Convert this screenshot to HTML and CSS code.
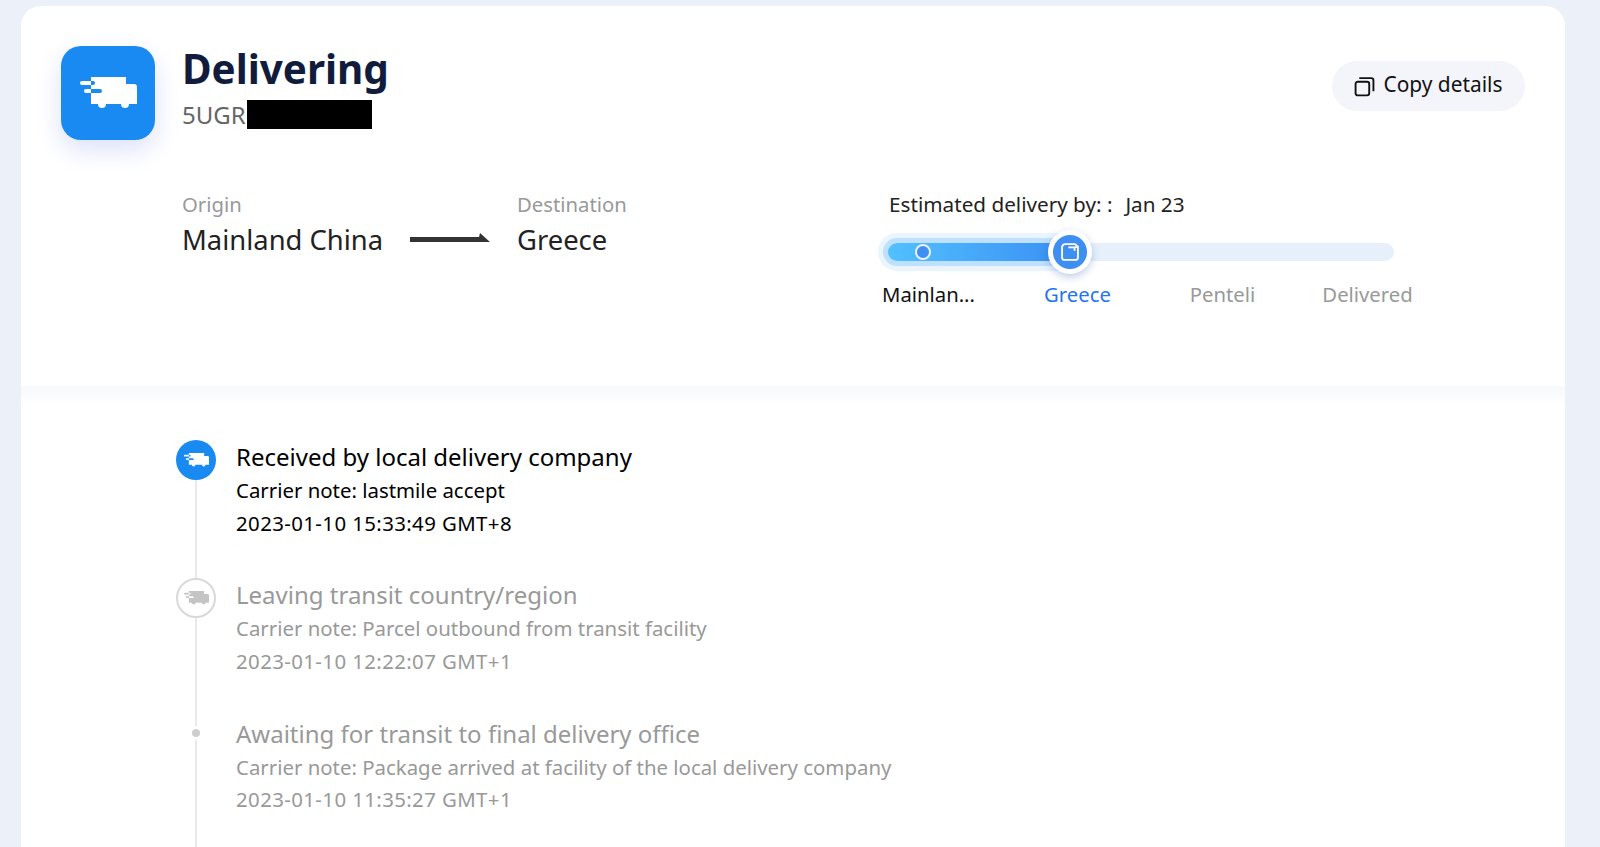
FILE: index.html
```html
<!DOCTYPE html>
<html lang="en">
<head>
<meta charset="utf-8">
<title>Delivering</title>
<link rel="stylesheet" href="styles.css">
</head>
<body>
<svg class="defs" width="0" height="0" aria-hidden="true">
  <symbol id="truck" viewBox="0 0 57 32">
    <path fill="currentColor" fill-rule="evenodd" d="M11 0H46V7H54Q57 7 57 10V27H11ZM11 4H13a2 2 0 0 1 0 4H11ZM11 12H20a2 2 0 0 1 0 4H11Z"/>
    <circle fill="currentColor" cx="22" cy="27" r="4"/>
    <circle fill="currentColor" cx="45" cy="27" r="4"/>
    <path fill="currentColor" d="M2 4H11V8H2a2 2 0 0 1 0-4z"/>
    <path fill="currentColor" d="M6 12H11V16H6a2 2 0 0 1 0-4z"/>
  </symbol>
</svg>
<main class="card">
  <section class="summary">
    <div class="head">
      <div class="head-icon"><svg class="head-truck"><use href="#truck"/></svg></div>
      <div class="head-text">
        <h1 class="title">Delivering</h1>
        <div class="tracking">5UGR<span class="redact"></span></div>
      </div>
      <button class="copy" type="button">
        <svg class="copy-icon" viewBox="0 0 20 20" fill="none" stroke="currentColor" stroke-width="1.800">
          <rect x="1.500" y="5.500" width="13" height="13" rx="2"/>
          <path d="M5 2h11.500a2 2 0 0 1 2 2v10.500"/>
        </svg>
        <span class="copy-text">Copy details</span>
      </button>
    </div>
    <div class="route">
      <div class="place place-origin">
        <div class="place-label">Origin</div>
        <div class="place-name">Mainland China</div>
      </div>
      <svg class="arrow" viewBox="0 0 80 10"><path fill="#333" d="M0 4h69l1-4 10 9H0z"/></svg>
      <div class="place place-dest">
        <div class="place-label">Destination</div>
        <div class="place-name">Greece</div>
      </div>
      <div class="progress">
        <div class="eta"><span>Estimated delivery by: :</span><span>Jan 23</span></div>
        <div class="track">
          <div class="fill"><span class="dot"></span></div>
          <span class="knob">
            <svg class="box" viewBox="0 0 24 24" fill="none" stroke="#fff" stroke-width="2.200" stroke-linejoin="round">
              <path d="M6 2.500h12l3.500 3v13a3 3 0 0 1-3 3h-13a3 3 0 0 1-3-3v-12a4 4 0 0 1 3.500-4z"/>
              <path d="M10 6.500h7.500v4M17.500 6.500l4-1"/>
            </svg>
          </span>
        </div>
        <div class="stops">
          <span class="stop stop-done">Mainlan...</span>
          <span class="stop stop-now">Greece</span>
          <span class="stop">Penteli</span>
          <span class="stop">Delivered</span>
        </div>
      </div>
    </div>
  </section>
  <section class="timeline">
    <article class="event event-current">
      <div class="marker"><span class="badge badge-solid"><svg class="badge-truck"><use href="#truck"/></svg></span></div>
      <div class="event-body">
        <h2 class="event-title">Received by local delivery company</h2>
        <p class="event-line">Carrier note: lastmile accept</p>
        <p class="event-line event-date">2023-01-10 15:33:49 GMT+8</p>
      </div>
    </article>
    <article class="event">
      <div class="marker"><span class="badge badge-outline"><svg class="badge-truck"><use href="#truck"/></svg></span></div>
      <div class="event-body">
        <h2 class="event-title">Leaving transit country/region</h2>
        <p class="event-line">Carrier note: Parcel outbound from transit facility</p>
        <p class="event-line event-date">2023-01-10 12:22:07 GMT+1</p>
      </div>
    </article>
    <article class="event">
      <div class="marker"><span class="pip"></span></div>
      <div class="event-body">
        <h2 class="event-title">Awaiting for transit to final delivery office</h2>
        <p class="event-line">Carrier note: Package arrived at facility of the local delivery company</p>
        <p class="event-line event-date">2023-01-10 11:35:27 GMT+1</p>
      </div>
    </article>
  </section>
</main>
</body>
</html>
```
FILE: styles.css
```css
* { box-sizing: border-box; }
html, body { height: 847px; overflow: hidden; }
body {
  margin: 0;
  padding: 6px 35px 0 21px;
  background: #ecf0f9;
  font-family: "Noto Sans", "Open Sans", sans-serif;
}
.defs { position: absolute; }
.card {
  background: #fff;
  border-radius: 20px 20px 0 0;
  height: 841px;
  overflow: hidden;
}
.summary { height: 380px; padding: 40px 40px 0; }
.head { display: flex; align-items: flex-start; }
.head-icon {
  width: 94px; height: 94px;
  border-radius: 20px;
  background: #1a8af3;
  box-shadow: 0 10px 24px rgba(60, 90, 220, .18);
  color: #fff;
  display: flex; align-items: center; justify-content: center;
}
.head-truck { width: 57px; height: 32px; }
.head-text { margin-left: 27px; margin-top: -3px; flex: 1; }
.title { margin: 0; font-size: 40.400px; line-height: 52px; font-weight: 700; color: #111c3d; }
.tracking { display: flex; font-size: 24px; line-height: 30px; color: #666; margin-top: 5px; }
.redact { width: 125px; height: 29px; background: #000; margin-left: 1px; }
.copy {
  margin-top: 15px;
  height: 50px; width: 193px;
  border: 0; border-radius: 25px;
  background: #f4f5fb;
  color: #111;
  font: 20.900px "Noto Sans", sans-serif;
  display: flex; align-items: center; justify-content: center; gap: 8px;
}
.copy-icon { width: 21px; height: 21px; }
.copy-text { margin-bottom: 4px; }
.route { display: flex; align-items: flex-start; margin-top: 50px; margin-left: 121px; }
.place-label { font-size: 20.300px; line-height: 28px; margin-bottom: 2px; color: #999; }
.place-name { font-size: 27.400px; line-height: 40px; color: #222; }
.place-origin { width: 228px; }
.arrow { width: 80px; height: 10px; margin-top: 43px; }
.place-dest { margin-left: 27px; width: 365px; }
.progress { width: 530px; }
.eta { display: flex; gap: 13px; font-size: 20.700px; line-height: 28px; color: #222; margin-left: 7px; }
.track {
  position: relative;
  width: 506px; height: 18px;
  margin: 25px 0 0 6px;
  background: #e6f0fb;
  border-radius: 9px;
}
.fill {
  position: relative;
  width: 182px; height: 18px;
  border-radius: 9px 0 0 9px;
  background: linear-gradient(90deg, #52c0ff, #3a8ff3);
  box-shadow: 0 0 0 5px rgba(82, 170, 255, .28), 0 0 0 10px rgba(82, 170, 255, .12);
}
.dot {
  position: absolute; left: 27px; top: 1px;
  width: 16px; height: 16px;
  border-radius: 50%;
  background: #3f8ff2;
  border: 2.500px solid #e8f3ff;
}
.knob {
  position: absolute; left: 160px; top: -13px;
  width: 44px; height: 44px;
  border-radius: 50%;
  background: #3f8ff2;
  border: 5px solid #fff;
  box-shadow: 0 3px 8px rgba(40, 90, 180, .3);
  display: flex; align-items: center; justify-content: center;
}
.box { width: 20px; height: 20px; }
.stops { display: grid; grid-template-columns: 123px 145px 145px 145px; margin-top: 19px; font-size: 20.300px; line-height: 28px; }
.stop { color: #999; text-align: center; }
.stop-done { color: #111; text-align: left; }
.stop-now { color: #1f75f2; }
.timeline {
  height: 461px;
  padding: 54px 0 0 151px;
  background: linear-gradient(#f8f9fc, #fff 20px);
}
.event { display: flex; height: 138.400px; }
.marker {
  position: relative;
  width: 64px; flex: none;
}
.marker::after {
  content: "";
  position: absolute; left: 23px; top: 0; bottom: 0;
  width: 2px; background: #e9e9e9;
}
.badge {
  position: relative; z-index: 1;
  width: 40px; height: 40px;
  margin-left: 4px;
  border-radius: 50%;
  display: flex; align-items: center; justify-content: center;
}
.badge-solid { background: #1a8af3; color: #fff; }
.badge-outline { background: #fff; border: 2px solid #d9d9d9; color: #c4c4c4; }
.badge-truck { width: 25px; height: 14px; }
.pip {
  position: absolute; z-index: 1; left: 20px; top: 12px;
  width: 8px; height: 8px; border-radius: 50%;
  background: #cfcfcf;
  box-shadow: 0 0 0 3px #fff;
}
.event-body { color: #999; }
.event-current .event-body { color: #000; }
.event-title { margin: 0; font-size: 24px; line-height: 34px; font-weight: 400; }
.event-line { margin: 0; font-size: 20.400px; line-height: 32.500px; }
.event-date { letter-spacing: .4px; }
```
